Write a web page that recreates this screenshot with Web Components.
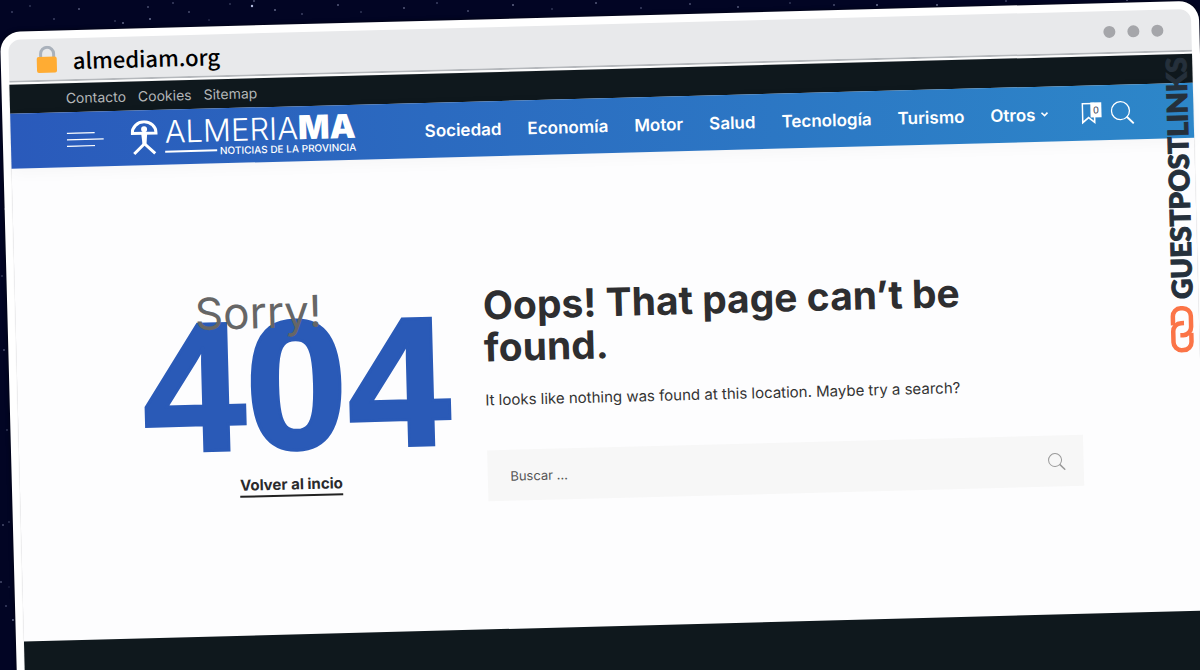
<!DOCTYPE html>
<html lang="es">
<head>
<meta charset="utf-8">
<meta name="viewport" content="width=device-width, initial-scale=1">
<title>almediam.org</title>
<style>
  body{margin:0;background:#020524;font-family:Inter,"Liberation Sans",sans-serif;color:#2e2e30}
</style>
</head>
<body>
<night-sky>
  <browser-window address="almediam.org">
    <top-links></top-links>
    <site-header></site-header>
    <not-found></not-found>
    <site-footer></site-footer>
    <side-brand slot="brand"></side-brand>
  </browser-window>
</night-sky>

<script>
class NightSky extends HTMLElement {
  connectedCallback() {
    this.attachShadow({ mode: 'open' });
    // x, y, radius, opacity
    const stars = [
      [79,9,1,.7],[54,19,1,.5],[115,21,1,.4],[123,23,1,.8],[148,7,1,.6],[150,19,1,.9],
      [173,3,1,.5],[189,12,1,.6],[209,20,1,.3],[230,4,1,.4],[252,6,1.5,.9],[254,1,1,.6],
      [275,10,1,.8],[302,14,1,.5],[338,5,1,.7],[361,12,1,.4],[404,8,1,.7],[437,3,1,.5],
      [468,11,1,.6],[513,5,1,.8],[552,9,1,.4],[596,3,1,.7],[641,8,1,.5],[690,4,1,.6],
      [738,7,1,.7],[790,3,1,.4],[834,5,1,.6],[877,5,1,.9],[937,5,1,.9],[1006,1,1,.5],
      [1127,0,1,.8],[12,12,1,.5],[30,6,1,.4],[3,104,1,.5],[5,209,1,.6],[2,276,1,.4],
      [4,350,1,.6],[7,430,1,.4],[9,522,1,.4],[3,525,1,.6],[1,582,1,.6],[9,587,1,.2],
      [6,606,1,.5],[13,620,1,.9]
    ];
    this.shadowRoot.innerHTML = `
      <style>
        :host{display:block;position:relative;height:100vh;overflow:hidden;background:#020524}
        svg{position:absolute;inset:0;width:100%;height:100%}
      </style>
      <svg aria-hidden="true" fill="#c9d2f5">
        ${stars.map(([x, y, r, o]) => `<circle cx="${x}" cy="${y}" r="${r * 0.8}" opacity="${o}"/>`).join('')}
      </svg>
      <slot></slot>
    `;
  }
}
customElements.define('night-sky', NightSky);

class BrowserWindow extends HTMLElement {
  connectedCallback() {
    this.attachShadow({ mode: 'open' });
    this.shadowRoot.innerHTML = `
      <style>
        :host{display:block;position:relative;padding-top:32px;margin-right:1px}
        .frame{position:relative;box-sizing:border-box;min-height:100vh;padding:8px;background:#fff;border-radius:20px;
          box-shadow:0 0 4px rgba(0,0,0,.6);transform:rotate(-1.5deg);transform-origin:0 0}
        .bar{display:flex;align-items:center;height:41px;padding:0 28px 0 27px;background:#e8e9eb;
          border-radius:12px 12px 0 0;border-bottom:2px solid #b5b8bc}
        .address{margin-left:14px;flex:1;font:500 22px/32px "Noto Sans CJK JP","Noto Sans",sans-serif;color:#000}
        .dots{display:flex;gap:12px}
        .dots i{width:12px;height:12px;border-radius:50%;background:#a5a6aa}
        .screen{display:flex;flex-direction:column;min-height:640px;margin-top:2px;background:#fdfdfe;
          box-shadow:0 0 1px #b8b8bc}
        .brand{position:absolute;top:56px;right:13px}
      </style>
      <div class="frame">
        <div class="bar">
          <svg width="23" height="28" viewBox="0 0 23 28" aria-hidden="true">
            <path d="M5 14V8a6.500 6.500 0 0 1 13 0v6" fill="none" stroke="#a9b1bb" stroke-width="3"/>
            <rect x="1" y="11" width="20" height="16" rx="2" fill="#ffac33"/>
          </svg>
          <span class="address">${this.getAttribute('address')}</span>
          <span class="dots"><i></i><i></i><i></i></span>
        </div>
        <div class="screen"><slot></slot></div>
        <div class="brand"><slot name="brand"></slot></div>
      </div>
    `;
  }
}
customElements.define('browser-window', BrowserWindow);

class TopLinks extends HTMLElement {
  connectedCallback() {
    this.attachShadow({ mode: 'open' });
    this.shadowRoot.innerHTML = `
      <style>
        :host{display:block;background:#0f181d}
        nav{display:flex;gap:12px;padding:0 56px;font-size:14px;line-height:29px}
        a{color:#b3b6b8;text-decoration:none}
      </style>
      <nav>
        <a href="#contacto">Contacto</a>
        <a href="#cookies">Cookies</a>
        <a href="#sitemap">Sitemap</a>
      </nav>
    `;
  }
}
customElements.define('top-links', TopLinks);

class SiteLogo extends HTMLElement {
  connectedCallback() {
    this.attachShadow({ mode: 'open' });
    this.shadowRoot.innerHTML = `
      <style>
        :host{display:block}
        a{display:flex;align-items:center;gap:7px;color:#fff;text-decoration:none}
        .name{display:flex;align-items:baseline;font:300 31px/28px Inter,sans-serif}
        .name b{font-size:33px;font-weight:900}
        .sub{display:flex;align-items:center;gap:3px;font-size:10px;font-weight:500;line-height:12px}
        .sub i{flex:1;height:2px;background:#fff}
      </style>
      <a href="#inicio">
        <svg width="27" height="35" viewBox="0 0 27 35" fill="none" stroke="#fff" stroke-width="3" aria-hidden="true">
          <path d="M1.500 13a12 11.500 0 0 1 24 0zM3 33.500l10.500-10 10.500 10"/>
          <path d="M10.500 13h6l-1 11h-4z" fill="#fff" stroke="none"/>
          <circle cx="13.500" cy="9" r="3" fill="#fff" stroke="none"/>
        </svg>
        <span>
          <span class="name">ALMERIA<b>MA</b></span>
          <span class="sub"><i></i>NOTICIAS DE LA PROVINCIA</span>
        </span>
      </a>
    `;
  }
}
customElements.define('site-logo', SiteLogo);

class SiteHeader extends HTMLElement {
  connectedCallback() {
    this.attachShadow({ mode: 'open' });
    this.shadowRoot.innerHTML = `
      <style>
        :host{display:block;background:linear-gradient(90deg,#2a5abb,#2d87c9);box-shadow:0 4px 16px rgba(0,0,0,.03)}
        header{display:flex;align-items:center;height:55px;padding:0 59px 0 56px;color:#fff}
        button{display:block;padding:0;border:0;background:none;color:inherit}
        svg{display:block}
        site-logo{margin-left:27px}
        nav{display:flex;gap:26px;margin-left:auto;font-size:17px;font-weight:600;line-height:24px}
        nav a{display:flex;align-items:center;gap:5px;color:#fff;text-decoration:none}
        .saved{position:relative;margin-left:33px}
        .count{position:absolute;top:0;right:0;width:11px;background:#fff;color:#3a3f55;font-size:10px;line-height:15px;text-align:center}
        .search{margin-left:9px}
      </style>
      <header>
        <button aria-label="Menú">
          <svg width="37" height="15" viewBox="0 0 37 15" stroke="#fff" stroke-width="1.200" aria-hidden="true">
            <path d="M0 1h28M0 7.500h37M0 14h28"/>
          </svg>
        </button>
        <site-logo></site-logo>
        <nav>
          <a href="#sociedad">Sociedad</a>
          <a href="#economia">Economía</a>
          <a href="#motor">Motor</a>
          <a href="#salud">Salud</a>
          <a href="#tecnologia">Tecnología</a>
          <a href="#turismo">Turismo</a>
          <a href="#otros">Otros
            <svg width="8" height="6" viewBox="0 0 8 6" fill="none" stroke="#fff" stroke-width="1.600" aria-hidden="true"><path d="M1 1l3 3 3-3"/></svg>
          </a>
        </nav>
        <button class="saved" aria-label="Guardados">
          <svg width="20" height="22" viewBox="0 0 20 22" fill="none" stroke="#fff" stroke-width="1.600" aria-hidden="true"><path d="M13 1H1v19l6-5 6 5V14"/></svg>
          <span class="count">0</span>
        </button>
        <button class="search" aria-label="Buscar">
          <svg width="24" height="24" viewBox="0 0 24 24" fill="none" stroke="#fff" stroke-width="1.300" aria-hidden="true"><circle cx="10" cy="10" r="9"/><path d="M16 16l7 7" stroke-width="2"/></svg>
        </button>
      </header>
    `;
  }
}
customElements.define('site-header', SiteHeader);

class NotFound extends HTMLElement {
  connectedCallback() {
    this.attachShadow({ mode: 'open' });
    this.shadowRoot.innerHTML = `
      <style>
        :host{display:block;min-height:473px;box-sizing:border-box;padding:126px 56px 0}
        main{display:grid;grid-template-columns:304px 1fr;gap:44px;max-width:944px;margin:0 auto}
        .code{display:flex;flex-direction:column;align-items:flex-start}
        .sorry{position:relative;z-index:1;margin-left:60px;font-size:44px;line-height:48px;color:#666}
        .number{margin:-15px 0 0 6px;font:700 184px/128px "Liberation Sans",Arial,sans-serif;color:#2a5ab7;
          -webkit-text-stroke:3px #2a5ab7}
        .back{align-self:center;margin-top:26px;border-bottom:2px solid #222;font-size:15px;font-weight:700;line-height:20px;color:#2a2a2c;text-decoration:none}
        h1{max-width:520px;margin:2px 0 20px;font-size:39px;font-weight:700;line-height:42px;color:#2e2e30}
        p{margin:0 0 38px;font-size:15px;line-height:24px;color:#333}
        form{display:flex;align-items:center;height:51px;padding:0 18px 0 23px;background:#f7f7f7}
        input{flex:1;padding:0;border:0;outline:0;background:none;font:13px/20px Inter,sans-serif;color:#444}
        input::placeholder{color:#555;opacity:1}
        button{padding:0;border:0;background:none}
        svg{display:block}
      </style>
      <main>
        <section class="code">
          <span class="sorry">Sorry!</span>
          <span class="number">404</span>
          <a class="back" href="#inicio">Volver al incio</a>
        </section>
        <section>
          <h1>Oops! That page can’t be found.</h1>
          <p>It looks like nothing was found at this location. Maybe try a search?</p>
          <form role="search">
            <input type="search" placeholder="Buscar ..." aria-label="Buscar">
            <button type="button" aria-label="Buscar">
              <svg width="18" height="18" viewBox="0 0 18 18" fill="none" stroke="#999" aria-hidden="true"><circle cx="7.500" cy="7.500" r="6.500"/><path d="M12 12l5.500 5.500" stroke-width="1.500"/></svg>
            </button>
          </form>
        </section>
      </main>
    `;
  }
}
customElements.define('not-found', NotFound);

class SiteFooter extends HTMLElement {
  connectedCallback() {
    this.attachShadow({ mode: 'open' });
    this.shadowRoot.innerHTML = `
      <style>
        :host{display:block;flex:1;background:#0f181d}
      </style>
      <footer></footer>
    `;
  }
}
customElements.define('site-footer', SiteFooter);

class SideBrand extends HTMLElement {
  connectedCallback() {
    this.attachShadow({ mode: 'open' });
    this.shadowRoot.innerHTML = `
      <style>
        :host{display:flex;flex-direction:column;align-items:center;gap:6px;width:24px}
        span{writing-mode:vertical-rl;transform:rotate(180deg);font:900 28px/24px Lato,sans-serif;color:#25303b;
          -webkit-text-stroke:1px #25303b}
      </style>
      <span>GUESTPOSTLINKS</span>
      <svg width="24" height="48" viewBox="0 0 24 48" fill="none" stroke="#fb7447" stroke-width="4.500" aria-hidden="true">
        <path d="M3 20v-9a8 8 0 0 1 8-8h2a8 8 0 0 1 8 8v11a8 8 0 0 1-8 8h-3"/>
        <path d="M21 28v9a8 8 0 0 1-8 8h-2a8 8 0 0 1-8-8V26a8 8 0 0 1 8-8h3"/>
      </svg>
    `;
  }
}
customElements.define('side-brand', SideBrand);
</script>
</body>
</html>
